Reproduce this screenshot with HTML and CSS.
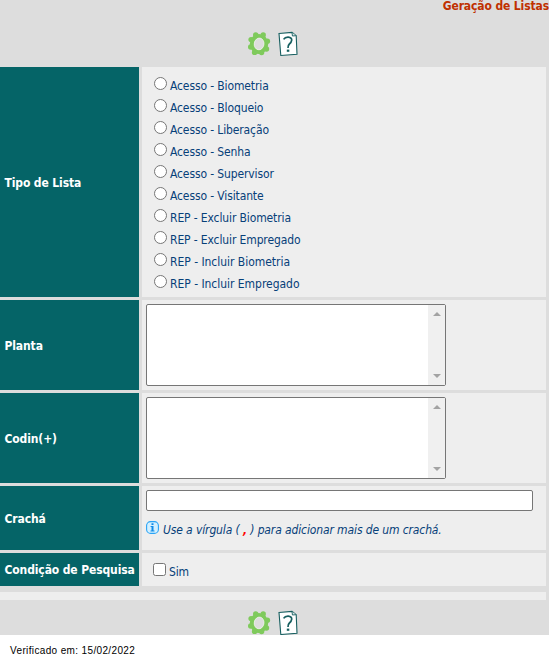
FILE: index.html
```html
<!DOCTYPE html>
<html lang="pt-BR">
<head>
<meta charset="utf-8">
<title>Geração de Listas</title>
<link rel="stylesheet" href="styles.css">
</head>
<body>
<svg class="defs" aria-hidden="true">
  <symbol id="gear" viewBox="0 0 24 26">
    <ellipse cx="12" cy="13" rx="7" ry="7.9" fill="none" stroke="#7fca5c" stroke-width="4.4"/>
    <g fill="#7fca5c">
      <circle cx="8.7" cy="3.9" r="2.7"/><circle cx="16.2" cy="4" r="2.7"/>
      <circle cx="20.4" cy="10.2" r="2.7"/><circle cx="19.5" cy="18" r="2.7"/>
      <circle cx="14.6" cy="21.6" r="2.7"/><circle cx="7.6" cy="21.4" r="2.7"/>
      <circle cx="3.7" cy="16" r="2.7"/><circle cx="4.1" cy="8.6" r="2.7"/>
    </g>
    <ellipse cx="12.1" cy="12.9" rx="4.9" ry="5.9" transform="rotate(10 12 13)" fill="#ddd" stroke="#f2f8ee" stroke-width=".6"/>
  </symbol>
  <symbol id="help" viewBox="0 0 20 26">
    <path fill="#fff" stroke="#175f60" stroke-width="1.1" d="M1 2.5L14 1.4 18.2 4.7 19 23.3 2.8 24.5z"/>
    <path fill="#d5e5e5" stroke="#175f60" stroke-width=".9" d="M14 1.4L14.4 5 18.2 4.7"/>
    <path fill="none" stroke="#175f60" stroke-width="1.7" d="M5.6 8.4Q7 6 10.2 6.1 13.9 6.4 13.7 9.2 13.5 11.2 11.4 13 9.8 14.4 10 17"/>
    <path fill="#175f60" d="M8.8 18.6h2.5v2.2H8.8z"/>
  </symbol>
</svg>
<main class="page">
  <header class="heading">Geração de Listas</header>
  <div class="toolbar"><svg class="gear"><use href="#gear"/></svg><svg class="help"><use href="#help"/></svg></div>
  <form class="form">
    <div class="label">Tipo de Lista</div>
    <div class="field options">
      <label class="option"><input type="radio" name="tipo"><span>Acesso - Biometria</span></label>
      <label class="option"><input type="radio" name="tipo"><span>Acesso - Bloqueio</span></label>
      <label class="option"><input type="radio" name="tipo"><span>Acesso - Liberação</span></label>
      <label class="option"><input type="radio" name="tipo"><span>Acesso - Senha</span></label>
      <label class="option"><input type="radio" name="tipo"><span>Acesso - Supervisor</span></label>
      <label class="option"><input type="radio" name="tipo"><span>Acesso - Visitante</span></label>
      <label class="option"><input type="radio" name="tipo"><span>REP - Excluir Biometria</span></label>
      <label class="option"><input type="radio" name="tipo"><span>REP - Excluir Empregado</span></label>
      <label class="option wide"><input type="radio" name="tipo"><span>REP - Incluir Biometria</span></label>
      <label class="option wide"><input type="radio" name="tipo"><span>REP - Incluir Empregado</span></label>
    </div>
    <div class="label">Planta</div>
    <div class="field"><div class="list"><div class="scroll"><i class="up"></i><i class="down"></i></div></div></div>
    <div class="label">Codin(+)</div>
    <div class="field"><div class="list"><div class="scroll"><i class="up"></i><i class="down"></i></div></div></div>
    <div class="label">Crachá</div>
    <div class="field">
      <input class="text" type="text">
      <div class="hint"><svg class="info" viewBox="0 0 13 13"><rect x=".6" y=".6" width="11.8" height="11.8" rx="4" fill="#d3f0ff" stroke="#2aa3f5" stroke-width="1.1"/><path fill="#128be8" d="M5.5 2.3h2v1.6h-2zM4.6 5h2.9v4.6h1v1h-4v-1h1V6h-.9z"/></svg><em>Use a vírgula ( <b>,</b> ) para adicionar mais de um crachá.</em></div>
    </div>
    <div class="label">Condição de Pesquisa</div>
    <div class="field"><label class="check"><input type="checkbox"><span>Sim</span></label></div>
  </form>
  <div class="strip"></div>
  <div class="toolbar bottom"><svg class="gear"><use href="#gear"/></svg><svg class="help"><use href="#help"/></svg></div>
</main>
<footer class="footer">Verificado em: 15/02/2022</footer>
</body>
</html>
```
FILE: styles.css
```css
* { box-sizing: border-box; }
body { margin: 0; height: 665px; overflow: hidden; background: #fff; color: #064079; font: 12px/16px "DejaVu Sans Condensed", "DejaVu Sans", sans-serif; font-stretch: condensed; letter-spacing: -.12px; }
.defs { position: absolute; width: 0; height: 0; }
.page { height: 635px; background: #ddd; overflow: hidden; }
.heading { height: 31px; line-height: 12px; text-align: right; color: #c03000; font-weight: bold; }
.toolbar { display: flex; height: 36px; padding-left: 247px; gap: 7px; }
.gear { width: 24px; height: 26px; }
.help { width: 20px; height: 26px; }
.form { display: grid; grid-template-columns: 139px 404px; grid-template-rows: 230px 90px 90px 64px 33px; gap: 3px; }
.label { display: flex; align-items: center; padding: 1px 0 0 4.5px; background: #056467; color: #fff; font-weight: bold; white-space: nowrap; }
.label:last-of-type { padding-top: 2px; }
.field { padding: 4px; background: #eee; }
.options { padding: 5px 0 0 12px; }
.option, .check { display: flex; height: 22px; }
.wide { letter-spacing: -.03px; }
input[type="radio"], input[type="checkbox"] { appearance: none; width: 13px; height: 13px; margin: 5px 3px 0 0; border: 1px solid #767676; background: #fff; }
input[type="radio"] { border-radius: 50%; }
input[type="checkbox"] { border-radius: 2.5px; }
.option span { padding-top: 6px; }
.list { display: flex; justify-content: flex-end; width: 300px; height: 82px; border: 1px solid #767676; border-radius: 2px; background: #fff; }
.scroll { display: flex; flex-direction: column; justify-content: space-between; align-items: center; width: 17px; padding: 7px 0 7px; background: #f0f0f0; }
.up, .down { border: 4px solid transparent; border-top-width: 0; border-bottom: 4px solid #a3a3a3; }
.down { border-top: 4px solid #a3a3a3; border-bottom-width: 0; }
.text { display: block; width: 387px; height: 21px; padding: 0; border: 1px solid #767676; border-radius: 2px; background: #fff; }
.hint { display: flex; gap: 4px; padding-top: 10px; white-space: nowrap; }
.info { width: 13px; height: 13px; flex: none; }
.hint em { padding-top: 1px; }
.hint b { color: #f00; }
.check { padding: 0 0 0 7px; }
.check input { margin-top: 6px; }
.check span { padding-top: 7px; }
.strip { width: 546px; height: 8px; margin-top: 6px; background: #eee; }
.bottom { padding-top: 10px; height: 35px; }
.footer { padding: 8px 0 0 10px; color: #000; font: 10px/15px "Liberation Sans", sans-serif; letter-spacing: .36px; }
```
